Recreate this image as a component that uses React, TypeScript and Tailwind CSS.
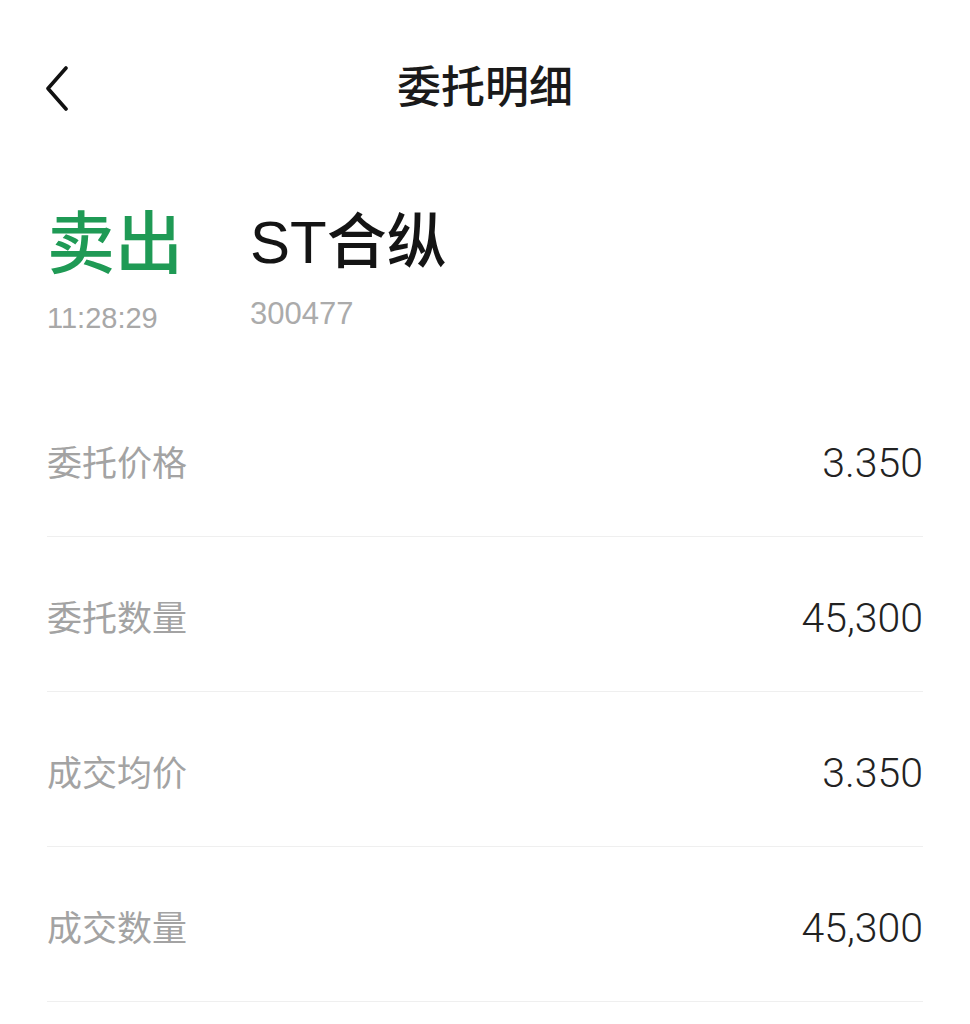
import React from 'react';

const rows = [
  { label: '委托价格', value: '3.350' },
  { label: '委托数量', value: '45,300' },
  { label: '成交均价', value: '3.350' },
  { label: '成交数量', value: '45,300' },
];

const cjk = { fontFamily: '"Liberation Sans", "Noto Sans CJK SC", sans-serif' };
const num = { fontFamily: 'Roboto, "Liberation Sans", sans-serif' };

export default function App() {
  return (
    <div className="w-[970px] min-h-[1024px] bg-white overflow-hidden" style={cjk}>
      <div className="relative h-[176px] flex items-center justify-center">
        <button className="absolute left-[38px] top-[60px] w-[40px] h-[56px] flex items-center justify-center">
          <svg width="26" height="46" viewBox="0 0 26 46" fill="none">
            <path d="M21 3 L3 23.5 L21 44" stroke="#111" strokeWidth="3.6" strokeLinecap="round" strokeLinejoin="round" />
          </svg>
        </button>
        <h1 className="text-[44px] leading-none font-medium text-[#1a1a1a]">委托明细</h1>
      </div>

      <div className="flex items-start px-[47px] pt-[34px]">
        <div className="w-[203px] flex flex-col">
          <span className="text-[68px] leading-none font-medium text-[#1f9a55]">卖出</span>
          <span className="mt-[26px] text-[29px] leading-none text-[#a8a8a8]">11:28:29</span>
        </div>
        <div className="flex flex-col">
          <span className="mt-[3px] text-[60px] leading-none font-medium text-[#141414]">ST合纵</span>
          <span className="mt-[25px] text-[31px] leading-none text-[#ababab]">300477</span>
        </div>
      </div>

      <div className="mt-[49px] px-[47px]">
        {rows.map((r) => (
          <div key={r.label} className="h-[155px] pt-[8px] flex items-center justify-between border-b border-[#efefef]">
            <span className="text-[35px] leading-none text-[#a3a3a3]">{r.label}</span>
            <span className="text-[41px] leading-none font-light text-[#222]" style={num}>{r.value}</span>
          </div>
        ))}
      </div>
    </div>
  );
}
